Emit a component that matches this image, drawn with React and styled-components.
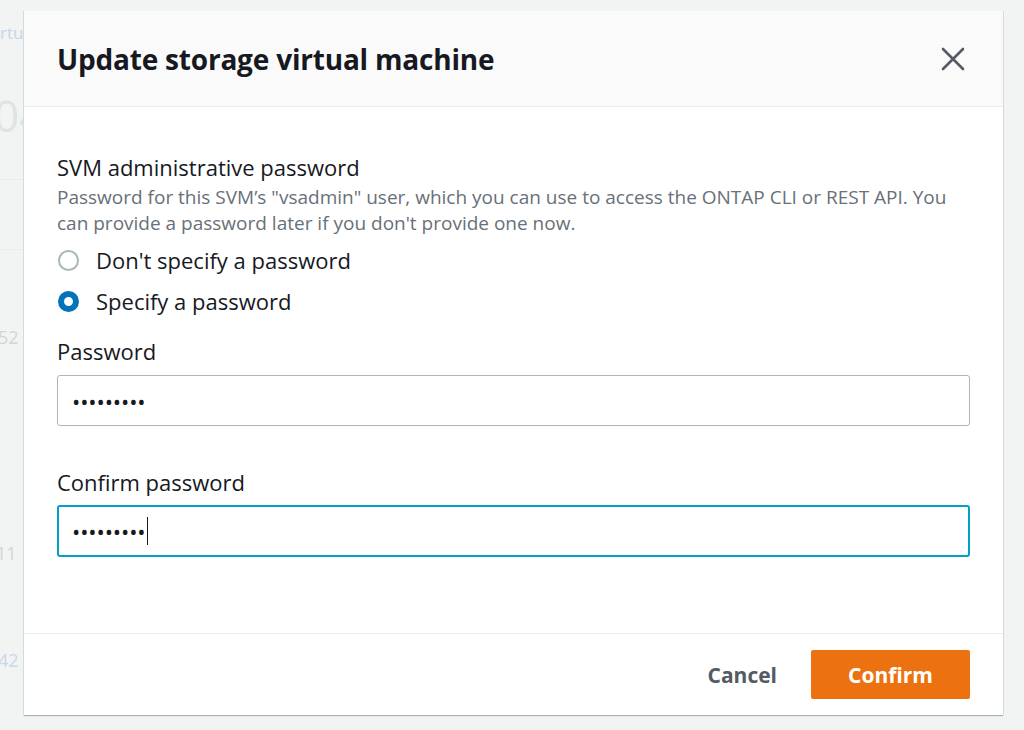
import React from "react";
import styled, { createGlobalStyle } from "styled-components";

const Global = createGlobalStyle`
  html, body { margin: 0; padding: 0; }
  body {
    background: #f2f3f3;
    font-family: "Open Sans", "Noto Sans", sans-serif;
    color: #16191f;
  }
  * { box-sizing: border-box; }
`;

const Page = styled.div`
  position: relative;
  width: 1024px;
  height: 730px;
  overflow: hidden;
  background: #f2f3f3;
`;

const Underlay = styled.div`
  display: flex;
  flex-direction: column;
  width: 24px;
  overflow: hidden;
  padding-top: 14px;
`;

const FaintItem = styled.div`
  height: ${(p) => p.h}px;
  flex-shrink: 0;
  display: flex;
  align-items: center;
  margin-left: ${(p) => p.shift || 0}px;
  font-size: ${(p) => p.size || 18}px;
  color: ${(p) => p.color || "#d5dbdb"};
  border-bottom: ${(p) => (p.line ? "1px solid #eaeded" : "none")};
  white-space: nowrap;
`;

const Dialog = styled.div`
  position: absolute;
  left: 24px;
  top: 11px;
  width: 979px;
  height: 704px;
  background: #fff;
  display: flex;
  flex-direction: column;
  box-shadow: -1px 0 0 #d5dbdb, 0 1px 1px rgba(0, 28, 36, 0.3), 1px 0 0 #e0e4e4;
`;

const Header = styled.div`
  height: 96px;
  background: #fafafa;
  border-bottom: 1px solid #eaeded;
  display: flex;
  align-items: center;
  justify-content: space-between;
  padding: 0 36px 0 33px;
`;

const Title = styled.h2`
  margin: 0;
  font-family: "Open Sans", sans-serif;
  font-weight: 700;
  font-size: 28px;
  letter-spacing: -0.2px;
  color: #16191f;
`;

const CloseButton = styled.button`
  border: none;
  background: none;
  padding: 0;
  width: 28px;
  height: 28px;
  display: flex;
  align-items: center;
  justify-content: center;
  cursor: pointer;
`;

const Body = styled.div`
  flex: 1;
  padding: 46px 33px 0 33px;
  display: flex;
  flex-direction: column;
`;

const Label = styled.div`
  font-size: 22px;
  line-height: 28px;
  color: #16191f;
`;

const Description = styled.div`
  font-size: 19px;
  line-height: 26px;
  letter-spacing: 0px;
  color: #687078;
  margin-top: 3px;
`;

const RadioGroup = styled.div`
  display: flex;
  flex-direction: column;
  gap: 13px;
  margin-top: 10px;
`;

const RadioRow = styled.label`
  display: flex;
  align-items: center;
  gap: 17px;
  height: 28px;
  font-size: 22px;
  color: #16191f;
`;

const RadioDot = styled.span`
  width: 21px;
  height: 21px;
  border-radius: 50%;
  margin-left: 1px;
  border: ${(p) => (p.checked ? "6px solid #0073bb" : "2px solid #aab7b8")};
  background: #fff;
  flex-shrink: 0;
`;

const Field = styled.div`
  display: flex;
  flex-direction: column;
  gap: ${(p) => p.gap}px;
  margin-top: ${(p) => p.top}px;
`;

const Input = styled.div`
  height: ${(p) => (p.focused ? 52 : 51)}px;
  border: ${(p) => (p.focused ? "2px solid #00a1c9" : "1px solid #aab7b8")};
  border-radius: 3px;
  display: flex;
  align-items: center;
  padding-left: ${(p) => (p.focused ? 13 : 14)}px;
  font-size: 22px;
  letter-spacing: -0.1px;
  color: #16191f;
`;

const Caret = styled.span`
  display: inline-block;
  width: 1.5px;
  height: 28px;
  background: #16191f;
  margin-left: 1px;
`;

const Footer = styled.div`
  height: 82px;
  border-top: 1px solid #eaeded;
  display: flex;
  align-items: center;
  justify-content: flex-end;
  gap: 34px;
  padding: 0 33px 0 0;
`;

const TextButton = styled.button`
  border: none;
  background: none;
  font-family: "Open Sans", sans-serif;
  font-weight: 700;
  font-size: 21px;
  color: #545b64;
  padding: 0;
  cursor: pointer;
`;

const PrimaryButton = styled.button`
  width: 159px;
  height: 49px;
  border: none;
  border-radius: 2px;
  background: #ec7211;
  color: #fff;
  font-family: "Open Sans", sans-serif;
  font-weight: 700;
  font-size: 21px;
  cursor: pointer;
`;

const dots = "\u2022\u2022\u2022\u2022\u2022\u2022\u2022\u2022\u2022";

export default function App() {
  return (
    <>
      <Global />
      <Page>
        <Underlay>
          <FaintItem h={36} size={17} color="#c6d6e8">rtu</FaintItem>
          <FaintItem h={130} size={44} color="#dfe3e3" shift={-6} line>04</FaintItem>
          <FaintItem h={70} line />
          <FaintItem h={67} />
          <FaintItem h={40} size={18} color="#d0d6d6" shift={-2}>52</FaintItem>
          <FaintItem h={176} />
          <FaintItem h={40} size={18} color="#d0d6d6" shift={-4}>11</FaintItem>
          <FaintItem h={67} />
          <FaintItem h={40} size={18} color="#c9d7e6" shift={-2}>42</FaintItem>
        </Underlay>
        <Dialog role="dialog">
          <Header>
            <Title>Update storage virtual machine</Title>
            <CloseButton aria-label="Close">
              <svg width="24" height="24" viewBox="0 0 24 24" fill="none" stroke="#545b64" strokeWidth="2.6" strokeLinecap="round">
                <path d="M2 2 L22 22 M22 2 L2 22" />
              </svg>
            </CloseButton>
          </Header>
          <Body>
            <Label>SVM administrative password</Label>
            <Description>
              Password for this SVM’s "vsadmin" user, which you can use to access the ONTAP CLI or REST API. You can provide a password later if you don't provide one now.
            </Description>
            <RadioGroup>
              <RadioRow><RadioDot />Don't specify a password</RadioRow>
              <RadioRow><RadioDot checked />Specify a password</RadioRow>
            </RadioGroup>
            <Field top={22} gap={10}>
              <Label>Password</Label>
              <Input>{dots}</Input>
            </Field>
            <Field top={42} gap={9}>
              <Label>Confirm password</Label>
              <Input focused>{dots}<Caret /></Input>
            </Field>
          </Body>
          <Footer>
            <TextButton>Cancel</TextButton>
            <PrimaryButton>Confirm</PrimaryButton>
          </Footer>
        </Dialog>
      </Page>
    </>
  );
}
